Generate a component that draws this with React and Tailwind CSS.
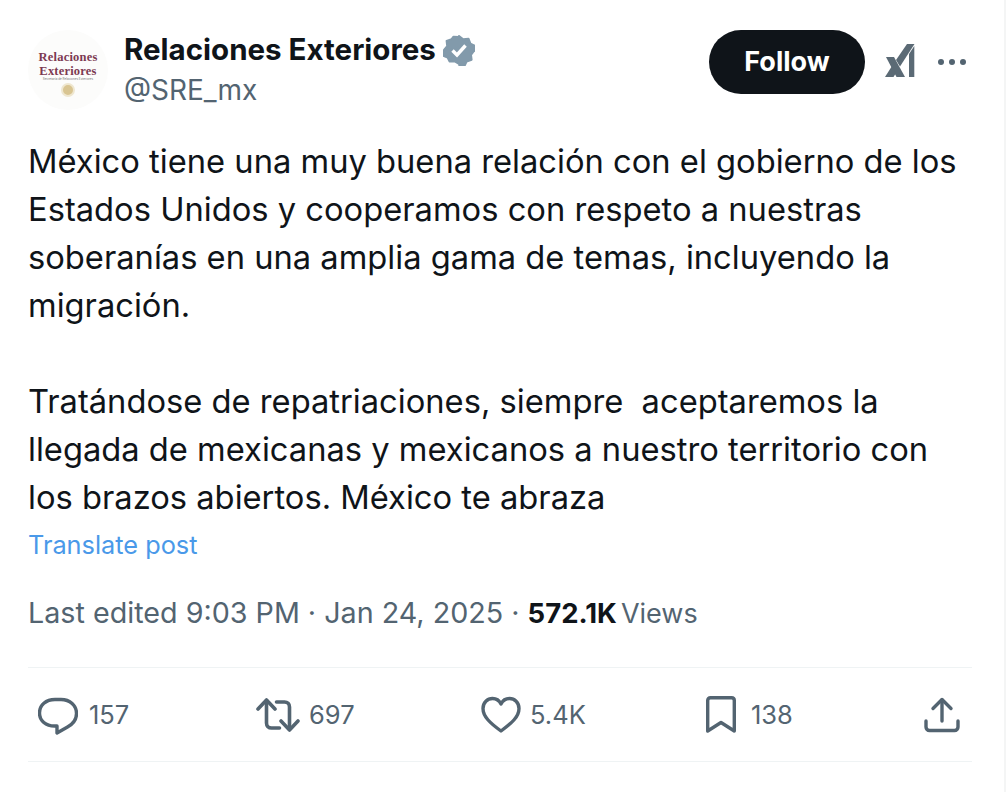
import React from 'react';

const Reply = () => (
  <svg viewBox="0 0 40 40" className="w-10 h-10" fill="none" stroke="#536471" strokeWidth="3.4" strokeLinejoin="round">
    <path d="M17 4.500h6c9 0 15.500 6 15.500 14 0 6-3.500 10.500-9 13.500l-10.500 6v-7h-2.500C8 31 1.500 26 1.500 18c0-8 6.500-13.500 15.500-13.500z" />
  </svg>
);

const Repost = () => (
  <svg viewBox="0 0 44 40" className="w-11 h-10" fill="none" stroke="#536471" strokeWidth="3.600" strokeLinecap="round" strokeLinejoin="round">
    <path d="M2 14 10.500 5 19 14" />
    <path d="M10.500 6v22c0 3 2 5 5 5h8" />
    <path d="M42 26 33.500 35 25 26" />
    <path d="M33.500 34V12c0-3-2-5-5-5h-8" />
  </svg>
);

const Heart = () => (
  <svg viewBox="0 0 40 40" className="w-10 h-10" fill="none" stroke="#536471" strokeWidth="3.400" strokeLinejoin="round">
    <path d="M20 36C9 28 2 21.500 2 13.500 2 7.500 6.500 3.500 11.500 3.500c3.800 0 6.800 2 8.500 5.500 1.700-3.500 4.700-5.500 8.500-5.500C33.500 3.500 38 7.500 38 13.500 38 21.500 31 28 20 36z" />
  </svg>
);

const Bookmark = () => (
  <svg viewBox="0 0 30 38" className="w-[30px] h-[38px]" fill="none" stroke="#536471" strokeWidth="3.400" strokeLinejoin="round">
    <path d="M1.700 4.500c0-1.700 1.100-2.800 2.800-2.800h21c1.700 0 2.800 1.100 2.800 2.800v30.500L15 26.500 1.700 35z" />
  </svg>
);

const Share = () => (
  <svg viewBox="0 0 36 36" className="w-9 h-9" fill="none" stroke="#536471" strokeWidth="3.400" strokeLinecap="round" strokeLinejoin="round">
    <path d="M18 24V3" />
    <path d="M9 11.500 18 2.500l9 9" />
    <path d="M2 24v6c0 2 1.500 3.500 3.500 3.500h25c2 0 3.500-1.500 3.500-3.500v-6" />
  </svg>
);

const Stat = ({ icon, value, className }) => (
  <div className={`flex items-center ${className}`}>
    {icon}
    <span className="text-[25.500px] leading-none text-[#536471]">{value}</span>
  </div>
);

export default function App() {
  return (
    <div className="w-[1006px] h-[792px] bg-white overflow-hidden border-r-2 border-[#f4f5f5] pt-[30px] pl-[28px] pr-[32px] font-['Inter','Liberation_Sans',sans-serif] text-[#0f1419]">
      <header className="flex items-start pr-[6px]">
        <div className="w-20 h-20 rounded-full bg-[#fcfcfb] flex flex-col items-center pt-5 shrink-0">
          <p className="font-['Liberation_Serif',serif] font-bold text-[12.500px] leading-[14px] tracking-[0.2px] text-center text-[#7d3a52]">Relaciones<br />Exteriores</p>
          <p className="text-[3px] leading-[3px] text-[#777777]">Secretaría de Relaciones Exteriores</p>
          <div className="w-[14px] h-[14px] mt-[2px] rounded-full bg-[#d9c592] border-2 border-[#efe7d0]" />
        </div>
        <div className="ml-4 flex-1">
          <div className="flex items-center gap-[7px] h-10">
            <span className="text-[29.500px] leading-none font-bold">Relaciones Exteriores</span>
            <svg viewBox="0 0 32 32" className="w-8 h-8">
              <path fill="#829aab" stroke="#829aab" strokeWidth="2" strokeLinejoin="round" d="M16 2l4.200 3.300 5.300-.6 1.900 4.900 4.600 2.200-.6 5.200 -.4 0 -3 3.800.6 4.900-5 1.900-1.900 3.900-5.300-.1L16 30l-4.200-2.700-5.300.1-1.900-3.900-5-1.900.6-4.900L1 16l3.200-3.800-.6-5.200 5-1.900 1.900-2.400 5.300.3z" />
              <path fill="none" stroke="#fff" strokeWidth="3.400" d="M9.500 16.500l4.500 4.500 8.500-9.500" />
            </svg>
          </div>
          <div className="text-[28px] leading-10 text-[#536471]">@SRE_mx</div>
        </div>
        <button className="w-[156px] h-16 rounded-full bg-[#0f1419] text-white text-[27px] font-bold">Follow</button>
        <svg viewBox="0 0 30 34" className="w-[30px] h-[34px] ml-5 mt-[14px]" fill="#5b6a75">
          <path d="M1 13h8l11 20h-8.500z" />
          <path d="M0 33l7-11 4 7-2.500 4z" />
          <path d="M22 0h7.500L15 22.500 11 16z" />
          <path d="M24 10l5.300-8v31H24z" />
        </svg>
        <div className="flex gap-[5px] ml-[23px] mt-[29px]">
          <span className="w-[6px] h-[6px] rounded-full bg-[#536471]" />
          <span className="w-[6px] h-[6px] rounded-full bg-[#536471]" />
          <span className="w-[6px] h-[6px] rounded-full bg-[#536471]" />
        </div>
      </header>

      <div className="mt-[27px] text-[32.700px] leading-12 whitespace-pre">
        {'México tiene una muy buena relación con el gobierno de los\nEstados Unidos y cooperamos con respeto a nuestras\nsoberanías en una amplia gama de temas, incluyendo la\nmigración.\n\nTratándose de repatriaciones, siempre  aceptaremos la\nllegada de mexicanas y mexicanos a nuestro territorio con\nlos brazos abiertos. México te abraza'}
      </div>

      <a className="block mt-2 text-[25.300px] leading-8 text-[#4a99e9]">Translate post</a>

      <div className="mt-[34px] text-[28.700px] leading-9 text-[#536471]">
        Last edited 9:03 PM · Jan 24, 2025 · <span className="font-bold text-[27.500px] text-[#0f1419]">572.1K</span> <span className="text-[27px] -ml-1">Views</span>
      </div>

      <div className="mt-[35px] border-y border-[#eff3f4] h-[95px] flex items-center justify-between pl-[10px] pr-[12px]">
        <Stat icon={<Reply />} value="157" className="w-[217px] gap-[11px]" />
        <Stat icon={<Repost />} value="697" className="w-[224px] gap-[9px]" />
        <Stat icon={<Heart />} value="5.4K" className="w-[224px] gap-[9px]" />
        <Stat icon={<Bookmark />} value="138" className="w-[217px] gap-[15px]" />
        <Share />
      </div>
    </div>
  );
}
